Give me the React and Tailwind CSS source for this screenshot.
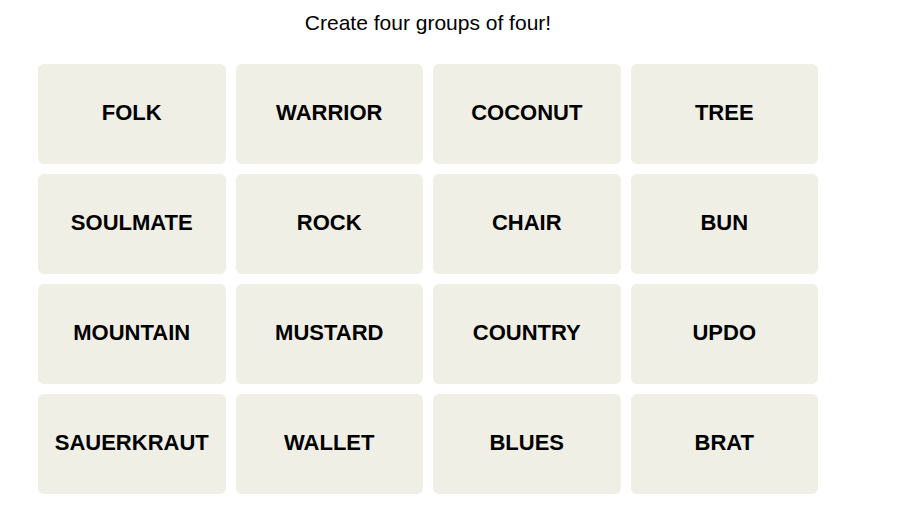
const words = [
  "FOLK", "WARRIOR", "COCONUT", "TREE",
  "SOULMATE", "ROCK", "CHAIR", "BUN",
  "MOUNTAIN", "MUSTARD", "COUNTRY", "UPDO",
  "SAUERKRAUT", "WALLET", "BLUES", "BRAT",
];

export default function App() {
  return (
    <div className="w-[902px] h-[517px] bg-white overflow-hidden">
      <div className="w-[856px] flex flex-col items-center">
        <p className="mt-[11px] text-[21px] leading-[24px] text-black font-['Liberation_Sans',Arial,sans-serif]">
          Create four groups of four!
        </p>
        <div className="mt-[29px] ml-[38px] self-start w-[780px] grid grid-cols-4 auto-rows-[100px] gap-[10px]">
          {words.map((w) => (
            <div
              key={w}
              className="bg-[#efefe6] rounded-[6px] flex items-center justify-center pb-[4px] text-[22px] font-bold text-black font-['Liberation_Sans',Arial,sans-serif]"
            >
              {w}
            </div>
          ))}
        </div>
      </div>
    </div>
  );
}
